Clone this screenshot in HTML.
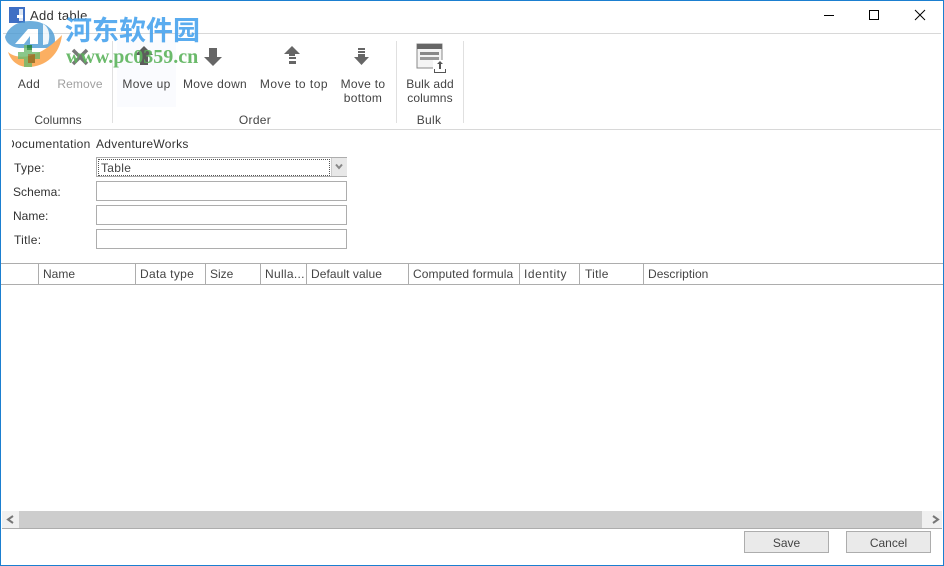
<!DOCTYPE html>
<html><head><meta charset="utf-8"><style>
html,body{margin:0;padding:0;background:#fff}
#r{position:relative;width:944px;height:566px;overflow:hidden;background:#fff;font-family:"Liberation Sans","Noto Sans CJK SC",sans-serif;font-size:12px;color:#444;}
.a{position:absolute}
.t{position:absolute;white-space:nowrap;line-height:14px;letter-spacing:.3px}
.c{text-align:center;transform:translateX(-50%)}
.in{position:absolute;left:96px;width:249px;height:18px;border:1px solid #adadad;background:#fff}
.h{position:absolute;top:264px;height:20px;width:1px;background:#adadad}
.btn{position:absolute;top:531px;height:20px;border:1px solid #adadad;background:#eaeaea;text-align:center;line-height:22px;letter-spacing:0}
</style></head><body><div id="r">
<div class="a" style="left:0;top:0;width:944px;height:1px;background:#1b7fd0"></div>
<div class="a" style="left:0;top:0;width:1px;height:566px;background:#1b7fd0"></div>
<div class="a" style="right:0;top:0;width:1px;height:566px;background:#1b7fd0"></div>
<div class="a" style="left:0;top:565px;width:944px;height:1px;background:#1b7fd0"></div>

<svg class="a" style="left:9px;top:7px" width="16" height="16"><rect width="16" height="16" fill="#3f6fc4"/><rect x="10" y="2" width="4" height="12" fill="#dfe8f5"/><rect x="8" y="8" width="6" height="3" fill="#fff"/></svg>
<div class="t" style="left:30px;top:9px;color:#333;font-size:13px">Add table</div>

<svg class="a" style="left:820px;top:8px" width="115" height="16" fill="none" stroke="#000"><path d="M4 7.500H14"/><rect x="49.500" y="2.500" width="9" height="9"/><path d="M95 2L105 12M105 2L95 12"/></svg>

<div class="a" style="left:3px;top:33px;width:938px;height:1px;background:#d8d8d8"></div>
<div class="a" style="left:3px;top:129px;width:938px;height:1px;background:#d8d8d8"></div>
<div class="a" style="left:112px;top:41px;width:1px;height:82px;background:#e0e0e0"></div>
<div class="a" style="left:396px;top:41px;width:1px;height:82px;background:#e0e0e0"></div>
<div class="a" style="left:463px;top:41px;width:1px;height:82px;background:#e0e0e0"></div>
<div class="a" style="left:117px;top:40px;width:59px;height:67px;background:#fafbfe"></div>

<svg class="a" style="left:0;top:0" width="480" height="110">
<path d="M73 50l14 14M87 50L73 64" stroke="#777" stroke-width="3.500" fill="none"/>
<path d="M144 46l9 9h-5v10h-8V55h-5z" fill="#5c5c5c"/>
<path d="M209 48h8v9h5l-9 9-9-9h5z" fill="#666"/>
<path d="M292 46l8 8h-5v2h-6v-2h-5z" fill="#666"/><rect x="289" y="57" width="7" height="2" fill="#666"/><rect x="289" y="61" width="7" height="3" fill="#666"/>
<rect x="358" y="48" width="7" height="2" fill="#666"/><rect x="358" y="51" width="7" height="2" fill="#666"/><path d="M358 54h7v3h4l-7.500 8-7.500-8h4z" fill="#666"/>
<rect x="417" y="44" width="25" height="24" fill="#f4f4f4" stroke="#888"/><rect x="417" y="44" width="25" height="5" fill="#666"/><rect x="420" y="52" width="19" height="3" fill="#888"/><rect x="420" y="57" width="19" height="3" fill="#999"/>
<rect x="433" y="60" width="13" height="13" fill="#fff"/><path d="M440 61l3 3h-2v5h-2v-5h-2z" fill="#555"/><path d="M434.500 69v3.500h11V69" stroke="#555" fill="none"/>
</svg>

<div class="t c" style="left:29px;top:77px">Add</div>
<div class="t c" style="left:80px;top:77px;color:#a0a0a0;letter-spacing:.1px">Remove</div>
<div class="t c" style="left:146.500px;top:77px">Move up</div>
<div class="t c" style="left:215px;top:77px">Move down</div>
<div class="t c" style="left:294px;top:77px;letter-spacing:.5px">Move to top</div>
<div class="t c" style="left:363px;top:77px;text-align:center">Move to<br>bottom</div>
<div class="t c" style="left:430px;top:77px;text-align:center;letter-spacing:.1px">Bulk add<br>columns</div>
<div class="t c" style="left:58px;top:113px;letter-spacing:0">Columns</div>
<div class="t c" style="left:255px;top:113px">Order</div>
<div class="t c" style="left:429px;top:113px">Bulk</div>

<div class="a" style="left:12px;top:137px;width:80px;height:14px;overflow:hidden"><div class="t" style="left:-6px;top:0;color:#333">Documentation</div></div>
<div class="t" style="left:96px;top:137px;color:#333">AdventureWorks</div>
<div class="t" style="left:14px;top:161px;color:#333">Type:</div>
<div class="t" style="left:13px;top:185px;color:#333;letter-spacing:.05px">Schema:</div>
<div class="t" style="left:13px;top:209px;color:#333;letter-spacing:0">Name:</div>
<div class="t" style="left:14px;top:233px;color:#333">Title:</div>

<div class="in" style="top:157px"></div>
<div class="a" style="left:98px;top:159px;width:230px;height:15px;border:1px dotted #555"></div>
<div class="a" style="left:331px;top:158px;width:15px;height:18px;background:#e8e8e8;border-left:1px solid #ccc"></div>
<svg class="a" style="left:334px;top:163px" width="10" height="8"><path d="M2 1.500l3 3.500 3-3.500" stroke="#888" stroke-width="2" fill="none"/></svg>
<div class="t" style="left:101px;top:161px;color:#444">Table</div>
<div class="in" style="top:181px"></div>
<div class="in" style="top:205px"></div>
<div class="in" style="top:229px"></div>

<div class="a" style="left:1px;top:263px;width:942px;height:1px;background:#adadad"></div>
<div class="a" style="left:1px;top:284px;width:942px;height:1px;background:#adadad"></div>
<div class="h" style="left:38px"></div><div class="h" style="left:135px"></div><div class="h" style="left:205px"></div><div class="h" style="left:260px"></div><div class="h" style="left:306px"></div><div class="h" style="left:408px"></div><div class="h" style="left:519px"></div><div class="h" style="left:579px"></div><div class="h" style="left:643px"></div>
<div class="t" style="left:43px;top:267px;letter-spacing:0">Name</div>
<div class="t" style="left:140px;top:267px">Data type</div>
<div class="t" style="left:210px;top:267px;letter-spacing:0">Size</div>
<div class="t" style="left:265px;top:267px">Nulla...</div>
<div class="t" style="left:311px;top:267px;letter-spacing:.07px">Default value</div>
<div class="t" style="left:413px;top:267px;letter-spacing:.1px">Computed formula</div>
<div class="t" style="left:524px;top:267px;letter-spacing:.55px">Identity</div>
<div class="t" style="left:585px;top:267px">Title</div>
<div class="t" style="left:648px;top:267px;letter-spacing:.03px">Description</div>

<div class="a" style="left:2px;top:511px;width:940px;height:17px;background:#cdcdcd"></div>
<div class="a" style="left:2px;top:511px;width:17px;height:17px;background:#f0f0f0"></div>
<div class="a" style="left:922px;top:511px;width:20px;height:17px;background:#f0f0f0"></div>
<div class="a" style="left:2px;top:528px;width:940px;height:1px;background:#adadad"></div>
<svg class="a" style="left:5px;top:514px" width="940" height="12" fill="none" stroke="#777" stroke-width="2"><path d="M8 2L3 5.500l5 3.500"/><path d="M928 2l5 3.500-5 3.500"/></svg>

<div class="btn" style="left:744px;width:83px">Save</div>
<div class="btn" style="left:846px;width:83px">Cancel</div>

<svg class="a" style="left:0;top:0;opacity:.8" width="70" height="72">
<path d="M5 37C8 27 18 21 30 21c14 0 25 8 25 19 0 4-2 7-5 8H19C11 47 6 43 5 37z" fill="#4a9ad4"/>
<path d="M15 44l13-15h10v15h-8v-8l-6 8z" fill="#fff"/>
<path d="M43 24c5 2 8 10 5 20l-5 1z" fill="#fff" opacity=".9"/>
<path d="M8 52c9 8 30 8 54-17-2 19-16 32-34 32-10 0-17-6-20-15z" fill="#fb9c3c"/>
</svg>
<svg class="a" style="left:17px;top:44px;opacity:.8" width="24" height="24"><path d="M7 1h8v7h8v7h-8v8H7v-8H1V8h6z" fill="#6dba6d"/><path d="M10 1h5v5h-5z" fill="#1d7f2d"/><path d="M11 10h7v9h-7z" fill="#8a6a20"/></svg>
<div class="t" style="left:65px;top:13px;font-size:27px;line-height:32px;font-weight:bold;color:#4da6ee;letter-spacing:0;opacity:.92;font-family:'Noto Sans CJK SC',sans-serif">河东软件园</div>
<div class="t" style="left:66px;top:46px;font-size:20px;line-height:22px;font-weight:bold;color:#5cb35c;letter-spacing:0;font-family:'Liberation Serif',serif;opacity:.9">www.pc0359.cn</div>
</div></body></html>
